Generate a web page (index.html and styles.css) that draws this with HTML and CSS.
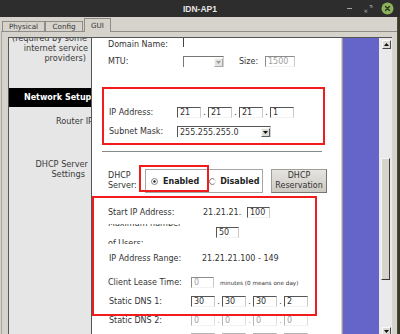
FILE: index.html
```html
<!DOCTYPE html>
<html>
<head>
<meta charset="utf-8">
<title>IDN-AP1</title>
<link rel="stylesheet" href="styles.css">
</head>
<body>
<div class="window">
  <div class="titlebar">
    <div></div>
    <div class="title">IDN-AP1</div>
    <div class="controls">
      <svg width="13" height="13" viewBox="0 0 13 13"><line x1="4" y1="6.5" x2="9" y2="6.5" stroke="#a3a3a3" stroke-width="1"/></svg>
      <svg width="13" height="13" viewBox="0 0 13 13"><path d="M7.5 3.5H10V6M5.5 10H3V7.5M10 3.5L7.8 5.7M3 10L5.2 7.8" fill="none" stroke="#8f8f8f" stroke-width="0.9"/></svg>
      <svg width="13" height="13" viewBox="0 0 13 13"><circle cx="6.5" cy="6.5" r="6" fill="#8ab35c"/><path d="M4.5 4.5L8.5 8.5M8.5 4.5L4.5 8.5" stroke="#2c3621" stroke-width="1.4" stroke-linecap="round"/></svg>
    </div>
  </div>
  <div class="main">
    <div class="tabs">
      <div class="tab t-phys">Physical</div>
      <div class="tab t-conf">Config</div>
      <div class="tab t-gui active">GUI</div>
    </div>
    <div class="panel">
      <div class="frame">
        <div class="side">
          <div class="side-top">
            <p class="s1">(required by some</p>
            <p class="s2">internet service</p>
            <p class="s3">providers)</p>
          </div>
          <div class="netsetup">Network Setup</div>
          <p class="router">Router IP</p>
          <p class="dhcp1">DHCP Server</p>
          <p class="dhcp2">Settings</p>
        </div>

        <div class="content">
          <div class="row r-domain">
            <span class="lbl w75">Domain Name:</span>
            <span class="domain-field"></span>
          </div>
          <div class="row r-mtu">
            <span class="lbl w75">MTU:</span>
            <div class="combo dis w41">
              <span class="val"></span>
              <span class="arrow"><svg width="5" height="3" viewBox="0 0 5 3"><polygon points="0,0 5,0 2.5,3" fill="#9a9a9a"/></svg></span>
            </div>
            <span class="lbl size-lbl">Size:</span>
            <span class="field dis w30">1500</span>
          </div>

          <div class="row r-ip">
            <span class="lbl w69 pl1">IP Address:</span>
            <span class="field w24">21</span><span class="dot">.</span>
            <span class="field w24">21</span><span class="dot">.</span>
            <span class="field w24">21</span><span class="dot">.</span>
            <span class="field w24">1</span>
          </div>
          <div class="row r-mask">
            <span class="lbl w69 pl1">Subnet Mask:</span>
            <div class="combo w94">
              <span class="val">255.255.255.0</span>
              <span class="arrow"><svg width="5" height="3" viewBox="0 0 5 3"><polygon points="0,0 5,0 2.5,3" fill="#111"/></svg></span>
            </div>
          </div>

          <div class="hsep"></div>

          <div class="row r-dhcp">
            <span class="lbl w37 two">DHCP<br>Server:</span>
            <div class="radios">
              <svg class="radio" width="7" height="7" viewBox="0 0 7 7"><circle cx="3.5" cy="3.5" r="3" fill="#fff" stroke="#6a6a6a" stroke-width="0.8"/><circle cx="3.5" cy="3.5" r="1.2" fill="#222"/></svg>
              <span class="rtext">Enabled</span>
              <svg class="radio r2" width="7" height="7" viewBox="0 0 7 7"><path d="M5.6 1.4A3 3 0 1 0 5.6 5.6" fill="none" stroke="#555" stroke-width="0.8"/><path d="M5.6 1.4A3 3 0 0 1 5.6 5.6" fill="none" stroke="#d8d8d8" stroke-width="0.8"/></svg>
              <span class="rtext">Disabled</span>
            </div>
            <div class="resv">DHCP<br>Reservation</div>
          </div>

          <div class="row r-start">
            <span class="lbl w95">Start IP Address:</span>
            <span class="lbl w44">21.21.21.</span>
            <span class="field w23">100</span>
          </div>
          <div class="row r-max">
            <div class="lbl w108 clip"><div class="clip-in">Maximum number<br>of Users:</div></div>
            <span class="field w23 top3">50</span>
          </div>
          <div class="row r-range">
            <span class="lbl w94 pl1">IP Address Range:</span>
            <span class="lbl">21.21.21.100 - 149</span>
          </div>
          <div class="row r-lease">
            <span class="lbl w83">Client Lease Time:</span>
            <span class="field w23 dis">0</span>
            <span class="mini">minutes (0 means one day)</span>
          </div>
          <div class="row r-dns1">
            <span class="lbl w83 pl1">Static DNS 1:</span>
            <span class="field w24">30</span><span class="dot">.</span>
            <span class="field w24">30</span><span class="dot">.</span>
            <span class="field w24">30</span><span class="dot">.</span>
            <span class="field w24">2</span>
          </div>
          <div class="row r-dns2 off">
            <span class="lbl w83 pl1">Static DNS 2:</span>
            <span class="field w24 dis">0</span><span class="dot">.</span>
            <span class="field w24 dis">0</span><span class="dot">.</span>
            <span class="field w24 dis">0</span><span class="dot">.</span>
            <span class="field w24 dis">0</span>
          </div>
          <div class="row r-dns3 off">
            <span class="lbl w83 pl1"></span>
            <span class="field w24 dis"></span><span class="dot"></span>
            <span class="field w24 dis"></span><span class="dot"></span>
            <span class="field w24 dis"></span><span class="dot"></span>
            <span class="field w24 dis"></span>
          </div>

          <div class="mark m1"></div>
          <div class="mark m2"></div>
          <div class="mark m3"></div>
        </div>

        <div class="vline"></div>
        <div class="purple"></div>
        <div class="scroll">
          <div class="sb-btn"><svg width="5" height="3" viewBox="0 0 5 3"><polygon points="0,3 5,3 2.5,0" fill="#111"/></svg></div>
          <div class="thumb"></div>
          <div class="sb-btn down"><svg width="5" height="3" viewBox="0 0 5 3"><polygon points="0,0 5,0 2.5,3" fill="#111"/></svg></div>
        </div>
      </div>
    </div>
  </div>
</div>
</body>
</html>
```
FILE: styles.css
```css
* { box-sizing: border-box; margin: 0; padding: 0; }
html, body { width: 400px; height: 334px; overflow: hidden; }
body {
  font-family: "DejaVu Sans", sans-serif;
  font-size: 8px;
  color: #333;
  background: #3a3926;
}
.window { width: 400px; height: 334px; display: flex; flex-direction: column; }

/* title bar */
.titlebar {
  height: 17px;
  flex: none;
  background: #2d2d2d;
  display: grid;
  grid-template-columns: 1fr auto 1fr;
  align-items: center;
}
.title {
  font-family: "Liberation Sans", sans-serif;
  font-weight: bold;
  font-size: 8.5px;
  color: #e4e4e4;
}
.controls {
  display: flex;
  justify-content: flex-end;
  gap: 6px;
  padding-right: 6px;
}
.controls svg { display: block; }

/* main window body */
.main {
  flex: 1;
  width: 398px;
  background: #d6d3cd;
  border-right: 1px solid #4a4a44;
  display: flex;
  flex-direction: column;
  min-height: 0;
}
.tabs {
  height: 14px;
  flex: none;
  display: flex;
  align-items: flex-end;
  padding-left: 2px;
}
.tab {
  height: 10px;
  border: 1px solid #8f8c86;
  border-bottom: none;
  display: flex;
  align-items: center;
  justify-content: center;
  font-size: 7.2px;
  color: #333;
  background: #d6d3cd;
}
.t-phys { width: 43px; }
.t-conf { width: 38px; }
.t-gui { width: 27px; margin-left: 1px; }
.tab.active {
  height: 14px;
  margin-bottom: -1px;
  position: relative;
  z-index: 1;
  border-color: #8f8c86;
}
.panel {
  flex: 1;
  min-height: 0;
  margin-left: 1px;
  border-top: 1px solid #8f8c86;
  border-left: 1px solid #aaa69f;
  padding: 5px 0 0 6px;
  display: flex;
}
.frame {
  width: 384px;
  border-top: 1px solid #555;
  border-left: 1px solid #555;
  display: flex;
  overflow: hidden;
}

/* left column */
.side {
  width: 83px;
  flex: none;
  background: #e6e6e6;
  border-right: 1px solid #555;
  font-size: 8.2px;
  line-height: 10px;
  color: #3a3a3a;
  text-align: right;
  overflow: hidden;
}
.side p { white-space: nowrap; }
.side-top { margin-top: -5px; }
.s1 { padding-right: 4px; }
.s2 { padding-right: 3px; }
.s3 { padding-right: 5px; }
.netsetup {
  margin-top: 25px;
  height: 19px;
  line-height: 19px;
  background: #000;
  color: #fff;
  font-weight: bold;
  font-size: 8px;
  text-align: left;
  padding-left: 15px;
  white-space: nowrap;
  overflow: hidden;
}
.router { margin-top: 9px; margin-right: -2px; }
.dhcp1 { margin-top: 33px; padding-right: 3px; }
.dhcp2 { padding-right: 6px; }

/* content column */
.content {
  width: 249px;
  flex: none;
  background: #fff;
  position: relative;
  overflow: hidden;
  padding-left: 16px;
  color: #333;
}
.row { display: flex; align-items: center; height: 11px; white-space: nowrap; }
.lbl { flex: none; line-height: 11px; }
.w37 { width: 37px; }
.w44 { width: 44px; }
.w69 { width: 69px; }
.w75 { width: 75px; }
.w83 { width: 83px; }
.w94 { width: 94px; }
.w95 { width: 95px; }
.w108 { width: 108px; }
.pl1 { padding-left: 1px; }

.r-domain { height: 12px; }
.domain-field {
  align-self: flex-start;
  width: 120px;
  height: 9px;
  border-left: 1px solid #444;
}
.r-mtu { margin-top: 6px; }
.size-lbl { margin-left: 15px; width: 26px; }
.r-ip { margin-top: 40px; }
.r-mask { margin-top: 8px; }
.hsep { margin: 14px 0 0 -6px; width: 220px; height: 1px; background: #8a8a8a; }
.r-dhcp { margin-top: 17px; height: 24px; }
.two { line-height: 10px; }
.r-start { margin-top: 14px; }
.r-max { margin-top: 6px; height: 20px; align-items: flex-start; }
.r-range { margin-top: 8px; height: 12px; }
.r-lease { margin-top: 13px; }
.r-dns1 { margin-top: 8px; }
.r-dns2 { margin-top: 8px; }
.r-dns3 { margin-top: 7px; }

.field {
  flex: none;
  height: 11px;
  border-top: 1px solid #555;
  border-left: 1px solid #555;
  border-right: 1px solid #c9c9c9;
  border-bottom: 1px solid #f2f2f2;
  padding-left: 2px;
  line-height: 9px;
  font-size: 8px;
  color: #333;
  background: #fff;
}
.field.dis { color: #a0a0a0; border-top-color: #8c8c8c; border-left-color: #8c8c8c; }
.off .field.dis { border-top-color: #b4b4b4; border-left-color: #b4b4b4; border-right-color: #e0e0e0; }
.off .dot { color: #aaa; }
.w23 { width: 23px; }
.w24 { width: 24px; }
.w30 { width: 30px; }
.w41 { width: 41px; }
.top3 { margin-top: 3px; }
.dot { width: 7px; flex: none; text-align: center; line-height: 11px; }

.combo {
  flex: none;
  height: 11px;
  display: flex;
  align-items: center;
  border-top: 1px solid #555;
  border-left: 1px solid #555;
  border-right: 1px solid #d0d0d0;
  background: #fff;
}
.combo.dis { border-top-color: #777; border-left-color: #777; }
.combo .val { flex: 1; padding-left: 2px; line-height: 9px; }
.combo .arrow {
  width: 9px;
  height: 9px;
  margin-right: 0;
  background: #dedcd7;
  border: 1px solid;
  border-color: #fafafa #5e5e5e #5e5e5e #fafafa;
  display: flex;
  align-items: center;
  justify-content: center;
}
.combo.dis .arrow { background: #e6e4e0; border-color: #fafafa #a8a8a8 #a8a8a8 #fafafa; }
.combo svg, .sb-btn svg { display: block; }

.radios {
  width: 118px;
  height: 24px;
  flex: none;
  border: 1px solid #a6a6a6;
  display: flex;
  align-items: center;
  padding-left: 5px;
}
.radio { display: block; flex: none; }
.rtext { font-weight: bold; margin-left: 5px; color: #222; }
.r2 { margin-left: 10px; }
.r2 + .rtext { margin-left: 4px; }
.resv {
  width: 56px;
  height: 24px;
  margin-left: 8px;
  flex: none;
  background: linear-gradient(#e6e4e0, #cdcac4);
  border: 1px solid #a29f99;
  border-right-color: #77746f;
  border-bottom-color: #77746f;
  line-height: 10px;
  text-align: center;
  padding-top: 1px;
  color: #333;
}

.clip { height: 20px; overflow: hidden; }
.clip-in { margin-top: -10px; line-height: 20px; }
.mini { font-size: 5.7px; margin-left: 6px; color: #333; }

.mark {
  position: absolute;
  border: 2px solid #f21c1c;
}
.m1 { left: 10px; top: 49px; width: 223px; height: 58px; }
.m2 { left: 47px; top: 127px; width: 70px; height: 27px; }
.m3 { left: 0; top: 158px; width: 225px; height: 120px; }

/* right side */
.vline { width: 2px; flex: none; background: linear-gradient(to right, #d2d2d2 50%, #9c9c9c 50%); }
.purple { width: 36px; flex: none; background: #6565c9; }
.scroll {
  width: 13px;
  flex: none;
  background: #eaeaea;
  display: flex;
  flex-direction: column;
  align-items: flex-start;
}
.sb-btn {
  margin: 2px 0 0 3px;
  width: 9px;
  height: 9px;
  background: #dcdad5;
  border: 1px solid;
  border-color: #fafafa #4a4a4a #4a4a4a #fafafa;
  display: flex;
  align-items: center;
  justify-content: center;
}
.sb-btn.down { margin-top: auto; margin-bottom: -2px; }
.thumb {
  margin: 109px 0 0 2px;
  width: 9px;
  height: 122px;
  background: #d6d3cd;
  border: 1px solid;
  border-color: #f5f5f5 #3a3a3a #3a3a3a #f5f5f5;
}
```
